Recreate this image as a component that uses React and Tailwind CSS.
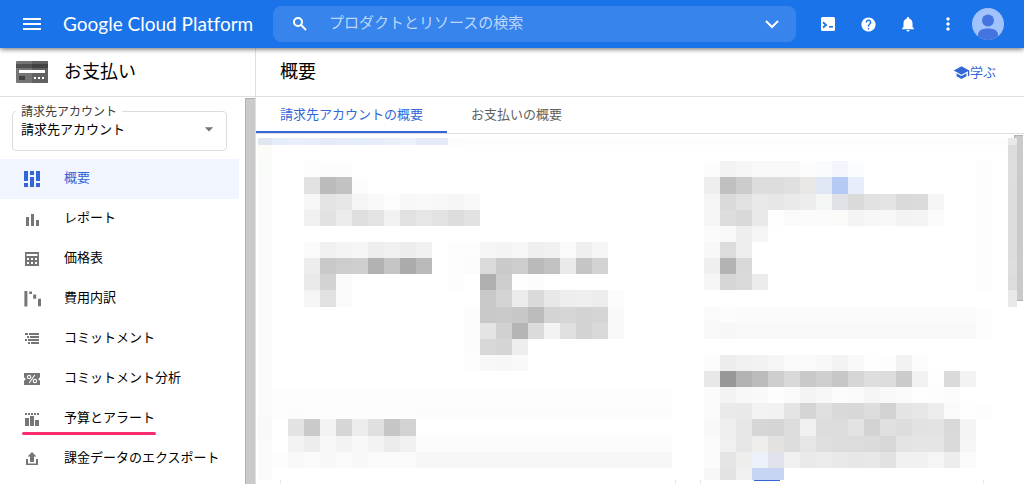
import React, { useState } from "react";
import {
  MdMenu,
  MdHelp,
  MdNotifications,
  MdMoreVert,
  MdSchool,
  MdArrowDropDown,
} from "react-icons/md";

const OverviewIcon = () => (
  <svg viewBox="0 0 16 16" className="w-4 h-4" fill="currentColor" shapeRendering="crispEdges">
    <path d="M0 0h4v10H0zM0 12h4v4H0zM6 0h4v4H6zM6 6h4v10H6zM12 0h4v10h-4zM12 12h4v4h-4z" />
  </svg>
);

const ReportIcon = () => (
  <svg viewBox="0 0 16 16" className="w-4 h-4" fill="currentColor">
    <path d="M2 6h3v9H2zM7 3h3v12H7zM12 9h3v6h-3z" />
  </svg>
);

const PricingIcon = () => (
  <svg viewBox="0 0 16 16" className="w-4 h-4" fill="currentColor">
    <path
      fillRule="evenodd"
      d="M1 1h14v14H1zM2.5 3h11v2h-11zM3 7h2v2H3zM7 7h2v2H7zM11 7h2v2h-2zM3 11h2v2H3zM7 11h2v2H7zM11 11h2v2h-2z"
    />
  </svg>
);

const BreakdownIcon = () => (
  <svg viewBox="0 0 16 16" className="w-4 h-4 overflow-visible" fill="currentColor">
    <path d="M0.4 0h3v15.6h-3zM5.2 0.4h2.8v2.7H5.2zM9.2 3.6h3v4.2h-3zM14 7.8h3v7.4h-3z" />
  </svg>
);

const CommitmentIcon = () => (
  <svg viewBox="0 0 16 16" className="w-4 h-4" fill="currentColor">
    <path d="M1 2h3v2H1zM5 2h10v2H5zM3 5h2v2H3zM6 5h9v2H6zM1 8h2v2H1zM4 8h11v2H4zM4 11h2v2H4zM7 11h8v2H7z" />
  </svg>
);

const AnalysisIcon = () => (
  <svg viewBox="0 0 16 16" className="w-4 h-4">
    <path
      fill="currentColor"
      d="M0 2h16v4.500a1.500 1.500 0 0 0 0 3V14H0V9.500a1.500 1.500 0 0 0 0-3z"
    />
    <g fill="none" stroke="#fff" strokeWidth="1.1">
      <circle cx="5.100" cy="6.100" r="1.700" />
      <circle cx="10.900" cy="9.900" r="1.700" />
      <path d="M10.800 4L5.200 12" />
    </g>
  </svg>
);

const BudgetIcon = () => (
  <svg viewBox="0 0 16 16" className="w-4 h-4" fill="currentColor">
    <path d="M1 2h2v2H1zM4 2h2v2H4zM7 2h2v2H7zM10 2h2v2h-2zM13 2h2v2h-2zM1 7h4v8H1zM6 5h4v10H6zM11 9h4v6h-4z" />
  </svg>
);

const ExportIcon = () => (
  <svg viewBox="0 0 16 16" className="w-4 h-4" fill="currentColor">
    <path d="M8 1l4.500 4.600H10V11H6V5.600H3.500zM2 8h2v4.400H12V8h2v6H2z" />
  </svg>
);

const CardIcon = () => (
  <svg viewBox="0 0 32 22" className="w-8 h-[22px]">
    <rect width="32" height="22" rx="1" fill="#757575" />
    <path d="M16 0h15a1 1 0 0 1 1 1v20a1 1 0 0 1-1 1H16z" fill="#616161" />
    <path d="M0 3h16v4H0z" fill="#505050" />
    <path d="M16 3h16v4H16z" fill="#424242" />
    <path d="M3 9h26v3H3z" fill="#fff" />
    <path d="M3 15h6v4H3z" fill="#424242" />
    <path d="M18 16h2v2h-2zM22 16h2v2h-2zM26 16h2v2h-2z" fill="#fff" />
  </svg>
);

const SearchIcon = () => (
  <svg
    viewBox="0 0 14 14"
    className="w-[14px] h-[14px] shrink-0"
    fill="none"
    stroke="currentColor"
    strokeWidth="2"
  >
    <circle cx="5" cy="5" r="4" />
    <path d="M7.800 7.800l5.200 5.200" />
  </svg>
);

const ShellIcon = () => (
  <svg viewBox="0 0 14 14" className="w-[14px] h-[14px]">
    <rect width="14" height="14" rx="1.500" fill="#fff" />
    <path d="M2 5.300L5 7.900L2 10.500" fill="none" stroke="#1a73e8" strokeWidth="1.800" />
    <path d="M8 9h4v1.600H8z" fill="#1a73e8" />
  </svg>
);

const AvatarIcon = () => (
  <svg viewBox="0 0 32 32" className="w-8 h-8 rounded-full">
    <rect width="32" height="32" fill="#a1c2fa" />
    <circle cx="16" cy="12.500" r="6" fill="#4374e0" />
    <path d="M6 32v-5c0-4.500 4-6.500 10-6.500s10 2 10 6.500v5z" fill="#4374e0" />
  </svg>
);

const navItems = [
  { label: "概要", icon: OverviewIcon, active: true },
  { label: "レポート", icon: ReportIcon },
  { label: "価格表", icon: PricingIcon },
  { label: "費用内訳", icon: BreakdownIcon },
  { label: "コミットメント", icon: CommitmentIcon },
  { label: "コミットメント分析", icon: AnalysisIcon },
  { label: "予算とアラート", icon: BudgetIcon, marked: true },
  { label: "課金データのエクスポート", icon: ExportIcon },
];

// Pixelated account details. Each row: top, height, then runs of
// [first column, shades]. "f7*4" repeats a shade over four columns.
const mosaic = [
  [4, 7, [0, "dfe6f2 e4edf9 e9effa e8edf9 e6eaf7 e5ecf8 e4ecf7 e7edf8 e9eef9 edf1fb e6eaf7 e4ebf6 fc fd*34 e8"]],
  [11, 16, [0, "fbfbf8"], [47, "dc"]],
  [27, 16, [0, "f9fbf9"], [3, "fd fc fc"], [28, "fc f3 f6 f9 f9 f9 fc f9fbfe f3f5fc fafcfe"], [45, "fd"], [47, "de"]],
  [43, 17, [0, "fa"], [3, "e2 bb c2 fc"], [28, "ee c0 cc dd dd e0 e9e8e7 e0e8f5 b5cbf5 e7edfb"], [45, "fd"], [47, "dd"]],
  [60, 16, [0, "fa"], [3, "f7 e4 e7 f5 f9 fd f8 f9 f8 f6 f9"], [28, "f5 da e1 e9 e7 ea ed f4f7f6 e0e2e7 da e2 e4 da db f5"], [45, "fd"], [47, "dd"]],
  [76, 16, [0, "fa"], [3, "f0 e2 ec df e4 f2 e1 e6 e3 dd e2"], [28, "f5 dd d9 e9 fe fa fb fb fafaf8 f4 f7 f8 f3 f4 fb"], [45, "fd"], [47, "dd"]],
  [92, 16, [0, "fa"], [28, "fb f9 ee f5"], [45, "fd"], [47, "dd"]],
  [108, 16, [0, "fa"], [3, "fb f0 f4 f6 ee f0 ed f1"], [12, "fd fd f6 f4 f7 ef f1 fa ef f5"], [28, "f8 dc ee"], [45, "fd"], [47, "dc"]],
  [124, 16, [0, "fa"], [3, "ed c9 cd cf b2 c5 ab ba"], [12, "fd fc db ca cd ba c2 ea c5 d2"], [28, "ef b3 d9"], [45, "fd"], [47, "de"]],
  [140, 16, [0, "fa"], [3, "ea d3 fa"], [12, "fd"], [14, "af cd fe fc"], [28, "f6 d6 da ec"], [45, "fd"], [47, "dc"]],
  [156, 17, [0, "fa"], [3, "f5 e1 fb"], [14, "c8 d4 ec da e8 ee ef ed fc"], [47, "e9"]],
  [173, 16, [0, "fa"], [13, "fc c8 ca c7 bc d4 d6 d3 d5 f9"], [28, "fa fc fb*15 fd"]],
  [189, 16, [0, "fa"], [13, "fc e4 d1 b5 db f3 e0 d3 d9 f9"], [28, "f9 f7 f9*15 fd"]],
  [205, 16, [0, "fa"], [13, "fc d8 d5 ee"]],
  [221, 16, [0, "fa"], [13, "fd f8 f7 f9"], [28, "fc ed f0 f2 f5 fa fa f8 f3 f9 fe fd f2 fc"]],
  [237, 16, [0, "fa"], [28, "e8 98 b3 bc ce d9 c9 cf c7 d6 de dc cb f2 fe da f3"]],
  [253, 16, [0, "fa"], [1, "fd*25"], [28, "fb f3 f8 f9 fd fa f4 f7 fc fa f5 f9 fa fe fd fc"]],
  [269, 16, [0, "fa"], [1, "fd fc fd*7 fc*16"], [28, "fb ea e9 f3 f2 e4 d5 e0 d9 d8 dd d2 e4 e7 ed fa fe fd"]],
  [285, 17, [0, "f9"], [2, "e3 ca f3 d6 ed e0 c6 d3"], [28, "f8 ef e6 d6 d5 dc f0 dd dc e3 d3 e0 dd e2 e3 d9 f4"]],
  [302, 16, [0, "fa"], [2, "f3 ed f8 f3 f8 f3 ec f1 fc*16"], [28, "fb f0 e6 efeeec e3e2e0 dd e6 df dc dc db d7 e4 e5 e5 da f5"]],
  [318, 16, [0, "fa"], [1, "fd f9 fb f8 fa f8 fa fb fa f7*16"], [28, "fb e5 eeeeec ecf1fa e0e3ec f0 ea ec e9 e7 e8 e2 f1 f1 f5 ed fa"]],
  [334, 12, [0, "fa"], [28, "f7 e3 f1 c7d5f5 c7d5f5"]],
];

const mosaicCells = mosaic.flatMap(([y, height, ...runs]) =>
  runs.flatMap(([start, shades]) =>
    shades
      .split(" ")
      .flatMap((part) => {
        const [shade, times = 1] = part.split("*");
        return Array(Number(times)).fill(shade);
      })
      .map((shade, i) => {
        const col = start + i;
        const x = col === 0 ? 2 : col * 16;
        const width = col === 0 ? 14 : col === 47 ? 9 : 16;
        const fill = shade.length === 2 ? `#${shade.repeat(3)}` : `#${shade}`;
        return { x, y, width, height, fill };
      })
  )
);

const Mosaic = () => (
  <svg
    viewBox="0 0 768 350"
    className="w-[768px] h-[350px] shrink-0"
    shapeRendering="crispEdges"
    aria-hidden="true"
  >
    <path d="M758 1h9v166h-9z" fill="#cacaca" />
    <path d="M758 1h9v1h-8v165h-1zM758 166h9v1h-9z" fill="#b0b0b0" />
    {mosaicCells.map((cell) => (
      <rect key={`${cell.x}-${cell.y}`} {...cell} />
    ))}
    <path d="M498 346h26v1h-26z" fill="#3367d6" />
    <path d="M24 346h1v4h-1zM419 346h1v4h-1zM444 346h1v4h-1zM727 346h1v4h-1z" fill="#e8e8e8" />
  </svg>
);

const Header = () => (
  <header className="relative z-10 flex items-center h-12 shrink-0 pr-4 bg-[#1a73e8] text-white shadow-[0_1px_5px_rgba(0,0,0,0.6)]">
    <div className="flex items-center w-[273px] shrink-0 pl-5">
      <button aria-label="メニュー">
        <MdMenu className="w-6 h-6" />
      </button>
      <a
        href="#"
        className="ml-[19px] text-[19px] leading-6 whitespace-nowrap [font-variant-ligatures:none] font-['Lato','Noto_Sans_CJK_JP',sans-serif]"
      >
        Google Cloud Platform
      </a>
    </div>
    <div className="flex flex-1 min-w-0 items-center h-9 pl-5 pr-4 mr-3 rounded-lg bg-[#3784ed]">
      <SearchIcon />
      <input
        type="text"
        aria-label="検索"
        placeholder="プロダクトとリソースの検索"
        className="flex-1 min-w-0 ml-[22px] pb-1 text-[15px] leading-6 bg-transparent outline-none placeholder:text-[#bdd7fa]"
      />
      <button aria-label="検索オプション">
        <svg viewBox="0 0 16 16" className="w-4 h-4" fill="none" stroke="currentColor" strokeWidth="2">
          <path d="M2 5l6 6l6-6" />
        </svg>
      </button>
    </div>
    <button className="flex justify-center w-10 shrink-0" aria-label="Cloud Shell">
      <ShellIcon />
    </button>
    <button className="flex justify-center w-10 shrink-0" aria-label="ヘルプ">
      <MdHelp className="w-[17px] h-[17px]" />
    </button>
    <button className="flex justify-center w-10 shrink-0" aria-label="通知">
      <MdNotifications className="w-[18px] h-[18px]" />
    </button>
    <button className="flex justify-center w-10 shrink-0" aria-label="その他">
      <MdMoreVert className="w-5 h-5" />
    </button>
    <button className="flex justify-center w-10 shrink-0" aria-label="アカウント">
      <AvatarIcon />
    </button>
  </header>
);

const Sidebar = () => (
  <aside className="flex flex-col w-64 shrink-0 border-r border-[#e0e0e0]">
    <div className="flex items-center h-[49px] shrink-0 pl-4 border-b border-[#e0e0e0]">
      <CardIcon />
      <h2 className="ml-4 pb-1 text-[18px] leading-6">お支払い</h2>
    </div>
    <div className="flex flex-1 min-h-0">
      <div className="flex-1 min-w-0 mr-1.5 overflow-hidden">
        <div className="relative mx-3 mt-[14px] mb-2">
          <label
            htmlFor="account"
            className="absolute -top-2 left-1 px-[5px] text-[12px] leading-4 bg-white text-[#3c3c3c]"
          >
            請求先アカウント
          </label>
          <select
            id="account"
            className="block w-full h-10 pl-2 pb-1 text-[13px] leading-5 border border-[#dadce0] rounded appearance-none bg-white"
          >
            <option>請求先アカウント</option>
          </select>
          <MdArrowDropDown className="absolute right-2 top-2 w-5 h-5 text-[#757575] pointer-events-none" />
        </div>
        <nav>
          {navItems.map(({ label, icon: Icon, active, marked }) => (
            <a
              key={label}
              href="#"
              className={`relative flex items-center h-10 pl-6 text-[13px] leading-5 ${
                active ? "bg-[#f0f5ff] text-[#3367d6]" : "text-black"
              }`}
            >
              <span className={active ? "" : "text-[#757575]"}>
                <Icon />
              </span>
              <span className="ml-6 pb-1 whitespace-nowrap">{label}</span>
              {marked && (
                <span className="absolute left-[22px] bottom-1 w-[134px] h-[3px] rounded-full bg-[#fc2d6f]" />
              )}
            </a>
          ))}
        </nav>
      </div>
      {/* Scrollbar */}
      <div className="w-[10px] mt-px shrink-0 bg-[#cacaca] border-l border-t border-[#b0b0b0]" />
    </div>
  </aside>
);

const tabs = ["請求先アカウントの概要", "お支払いの概要"];

const App = () => {
  const [activeTab, setActiveTab] = useState(0);

  return (
    <div className="flex flex-col h-screen bg-white text-black overflow-hidden font-['Noto_Sans_CJK_JP',sans-serif]">
      <Header />
      <div className="flex flex-1 min-h-0">
        <Sidebar />
        <main className="flex flex-col flex-1 min-w-0">
          <div className="flex items-center justify-between h-[49px] shrink-0 pl-6 pr-7 border-b border-[#e0e0e0]">
            <h1 className="pb-1 text-[18px] leading-6">概要</h1>
            <a href="#" className="flex items-center text-[13px] leading-5 text-[#3367d6]">
              <MdSchool className="w-[17px] h-[17px]" />
              学ぶ
            </a>
          </div>
          <div className="flex h-[37px] shrink-0 border-b border-[#e0e0e0]">
            {tabs.map((tab, i) => (
              <button
                key={tab}
                onClick={() => setActiveTab(i)}
                className={`px-6 text-[13px] leading-5 border-b-2 ${
                  activeTab === i
                    ? "border-[#3367d6] text-[#3367d6]"
                    : "border-transparent text-[#616161]"
                }`}
              >
                {tab}
              </button>
            ))}
          </div>
          <div className="flex flex-1 min-h-0 overflow-hidden">
            <Mosaic />
          </div>
        </main>
      </div>
    </div>
  );
};

export default App;
